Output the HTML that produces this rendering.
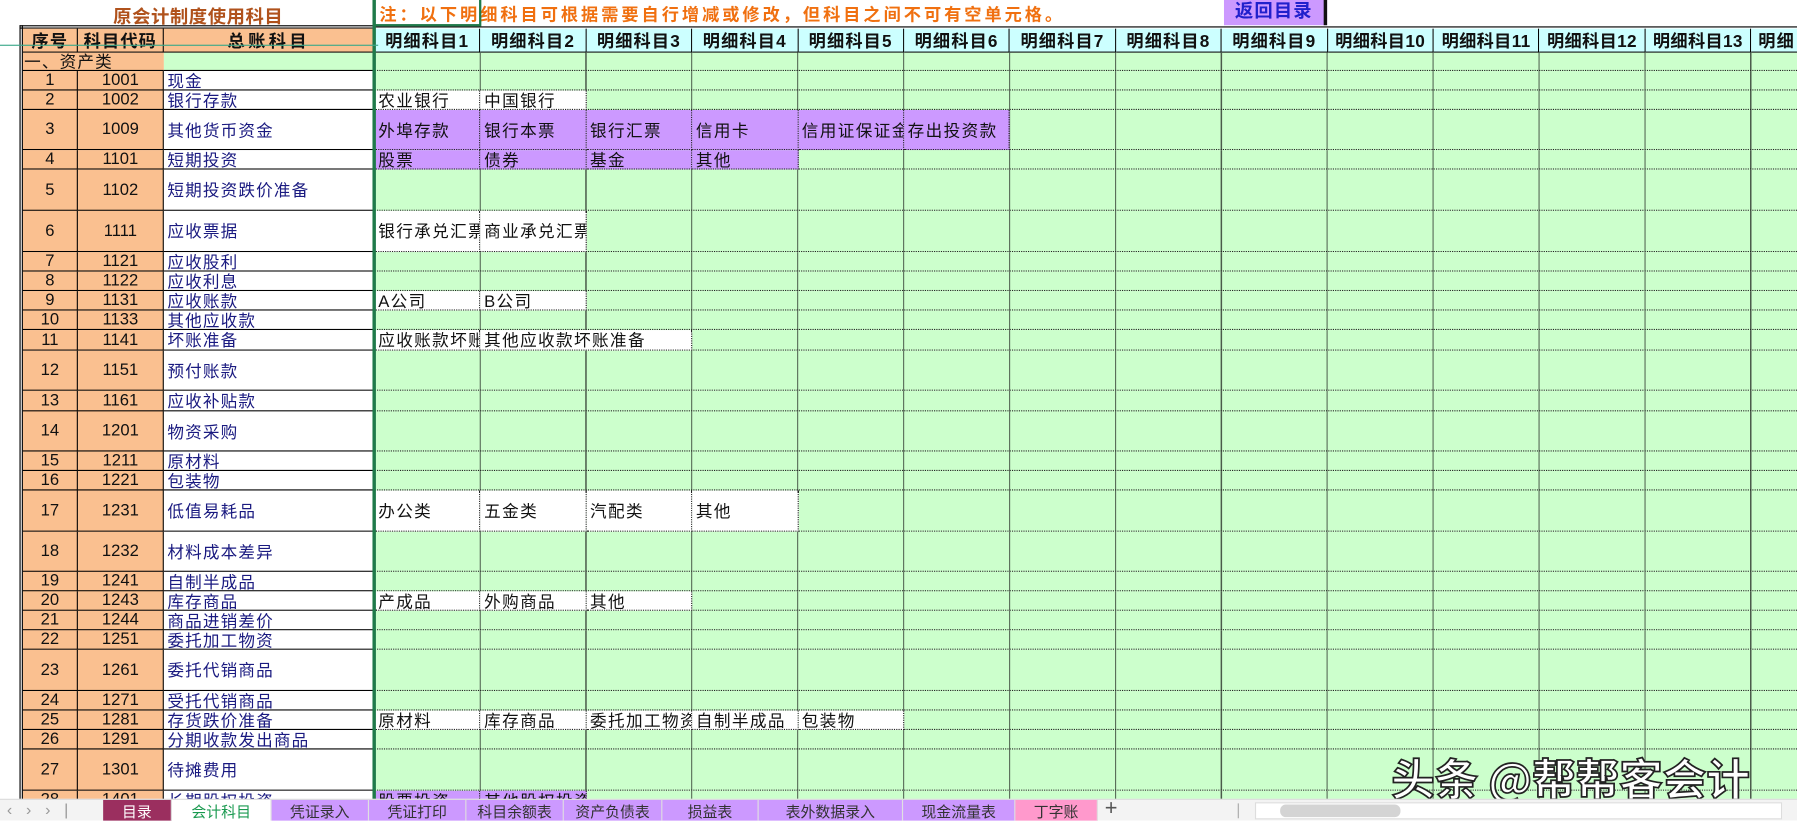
<!DOCTYPE html>
<html><head><meta charset="utf-8"><style>
*{margin:0;padding:0;box-sizing:border-box}
html,body{width:1797px;height:820px;overflow:hidden;background:#fff}
#w{position:absolute;left:0;top:0;width:1568px;height:716px;transform:scale(1.14605);transform-origin:0 0;font-family:"Liberation Sans","Noto Sans CJK SC",sans-serif;font-size:14.5px;color:#111;overflow:hidden}
.t{position:absolute;white-space:nowrap}
.r{position:absolute;left:20px;width:1548px}
.r>b,.r>i,.r>s{position:absolute;top:0;height:100%;font-weight:normal;font-style:normal;text-decoration:none;white-space:nowrap;overflow:hidden;display:flex;align-items:center}
.a{left:0;width:48px;background:#FAC090;border-right:1px solid #000;border-bottom:1px solid #000;justify-content:center}
.c{left:48px;width:75px;background:#FAC090;border-right:1px solid #000;border-bottom:1px solid #000;justify-content:center}
.n{left:123px;width:184px;background:#fff;border-bottom:1px solid #000;color:#1a1a80;padding-left:3px;letter-spacing:1px}
.d{left:307px;width:1241px;background-color:#CCFFCC;background-image:repeating-linear-gradient(to right,transparent 0,transparent 91.4px,#4a5a4a 91.4px,#4a5a4a 92.4px);border-bottom:1px dotted #222}
.x{width:92.4px;background:#fff;border-right:1px dotted #222;border-bottom:1px dotted #222;padding-left:3px;letter-spacing:1.2px}
.p{background:#CC99FF}
.h{position:absolute;top:25px;height:21px;display:flex;align-items:center;justify-content:center;font-weight:bold;font-size:15px;letter-spacing:1px;border-right:1px solid #000;border-bottom:1px solid #000;white-space:nowrap;overflow:hidden}
.tab{position:absolute;top:0;height:19px;display:flex;align-items:center;justify-content:center;font-size:13px;color:#333;border-right:1px solid #e0e0e0}
</style></head><body><div id="w">
<div class="t" style="left:20px;width:306px;top:1px;text-align:center;color:#B0521C;font-weight:bold;font-size:16px;letter-spacing:0.5px">原会计制度使用科目</div>
<div class="t" style="left:331px;top:2px;color:#F07010;font-weight:bold;font-size:15px;letter-spacing:2.6px">注：以下明细科目可根据需要自行增减或修改，但科目之间不可有空单元格。</div>
<div class="t" style="left:1068px;top:0;width:90px;height:22px;background:#CC99FF;border-right:3px solid #111;color:#2020cc;font-weight:bold;font-size:16px;letter-spacing:1px;text-align:center;line-height:22px">返回目录</div>
<div style="position:absolute;left:17px;top:22px;width:310px;height:3px;border-top:1px solid #000;border-bottom:1px solid #000"></div>
<div style="position:absolute;left:327px;top:23px;width:1241px;height:2px;border-top:1px solid #000"></div>
<div style="position:absolute;left:0;top:39px;width:330px;height:1px;background:#3ba88a;z-index:5"></div>
<div class="h" style="left:20px;width:48px;background:#FAC090">序号</div>
<div class="h" style="left:68px;width:75px;background:#FAC090">科目代码</div>
<div class="h" style="left:143px;width:184px;background:#FAC090;letter-spacing:3px">总账科目</div>
<div class="h" style="left:327px;width:92.4px;background:#CCFFFF">明细科目1</div>
<div class="h" style="left:419.4px;width:92.4px;background:#CCFFFF">明细科目2</div>
<div class="h" style="left:511.8px;width:92.4px;background:#CCFFFF">明细科目3</div>
<div class="h" style="left:604.2px;width:92.4px;background:#CCFFFF">明细科目4</div>
<div class="h" style="left:696.6px;width:92.4px;background:#CCFFFF">明细科目5</div>
<div class="h" style="left:789px;width:92.4px;background:#CCFFFF">明细科目6</div>
<div class="h" style="left:881.4px;width:92.4px;background:#CCFFFF">明细科目7</div>
<div class="h" style="left:973.8px;width:92.4px;background:#CCFFFF">明细科目8</div>
<div class="h" style="left:1066.2px;width:92.4px;background:#CCFFFF">明细科目9</div>
<div class="h" style="left:1158.6px;width:92.4px;background:#CCFFFF;letter-spacing:0.3px">明细科目10</div>
<div class="h" style="left:1251px;width:92.4px;background:#CCFFFF;letter-spacing:0.3px">明细科目11</div>
<div class="h" style="left:1343.4px;width:92.4px;background:#CCFFFF;letter-spacing:0.3px">明细科目12</div>
<div class="h" style="left:1435.8px;width:92.4px;background:#CCFFFF;letter-spacing:0.3px">明细科目13</div>
<div class="h" style="left:1528.2px;width:92.4px;background:#CCFFFF;justify-content:flex-start;padding-left:6px">明细</div>

<div class="r" style="top:46px;height:16px"><b class="a" style="width:123px;justify-content:flex-start;padding-left:1px;border-right:none;letter-spacing:1px">一、资产类</b><b class="n" style="background:#CCFFCC"></b><i class="d"></i></div>
<div class="r" style="top:62px;height:17px"><b class="a">1</b><b class="c">1001</b><b class="n">现金</b><i class="d"></i></div>
<div class="r" style="top:79px;height:17px"><b class="a">2</b><b class="c">1002</b><b class="n">银行存款</b><i class="d"></i><s class="x" style="left:307px">农业银行</s><s class="x" style="left:399.4px">中国银行</s></div>
<div class="r" style="top:96px;height:35px"><b class="a">3</b><b class="c">1009</b><b class="n">其他货币资金</b><i class="d"></i><s class="x p" style="left:307px">外埠存款</s><s class="x p" style="left:399.4px">银行本票</s><s class="x p" style="left:491.8px">银行汇票</s><s class="x p" style="left:584.2px">信用卡</s><s class="x p" style="left:676.6px">信用证保证金</s><s class="x p" style="left:769px">存出投资款</s></div>
<div class="r" style="top:131px;height:17px"><b class="a">4</b><b class="c">1101</b><b class="n">短期投资</b><i class="d"></i><s class="x p" style="left:307px">股票</s><s class="x p" style="left:399.4px">债券</s><s class="x p" style="left:491.8px">基金</s><s class="x p" style="left:584.2px">其他</s></div>
<div class="r" style="top:148px;height:36px"><b class="a">5</b><b class="c">1102</b><b class="n">短期投资跌价准备</b><i class="d"></i></div>
<div class="r" style="top:184px;height:36px"><b class="a">6</b><b class="c">1111</b><b class="n">应收票据</b><i class="d"></i><s class="x" style="left:307px">银行承兑汇票</s><s class="x" style="left:399.4px">商业承兑汇票</s></div>
<div class="r" style="top:220px;height:17px"><b class="a">7</b><b class="c">1121</b><b class="n">应收股利</b><i class="d"></i></div>
<div class="r" style="top:237px;height:17px"><b class="a">8</b><b class="c">1122</b><b class="n">应收利息</b><i class="d"></i></div>
<div class="r" style="top:254px;height:17px"><b class="a">9</b><b class="c">1131</b><b class="n">应收账款</b><i class="d"></i><s class="x" style="left:307px">A公司</s><s class="x" style="left:399.4px">B公司</s></div>
<div class="r" style="top:271px;height:17px"><b class="a">10</b><b class="c">1133</b><b class="n">其他应收款</b><i class="d"></i></div>
<div class="r" style="top:288px;height:18px"><b class="a">11</b><b class="c">1141</b><b class="n">坏账准备</b><i class="d"></i><s class="x" style="left:307px">应收账款坏账</s><s class="x" style="left:399.4px;width:184.8px">其他应收款坏账准备</s></div>
<div class="r" style="top:306px;height:35px"><b class="a">12</b><b class="c">1151</b><b class="n">预付账款</b><i class="d"></i></div>
<div class="r" style="top:341px;height:18px"><b class="a">13</b><b class="c">1161</b><b class="n">应收补贴款</b><i class="d"></i></div>
<div class="r" style="top:359px;height:35px"><b class="a">14</b><b class="c">1201</b><b class="n">物资采购</b><i class="d"></i></div>
<div class="r" style="top:394px;height:17px"><b class="a">15</b><b class="c">1211</b><b class="n">原材料</b><i class="d"></i></div>
<div class="r" style="top:411px;height:17px"><b class="a">16</b><b class="c">1221</b><b class="n">包装物</b><i class="d"></i></div>
<div class="r" style="top:428px;height:36px"><b class="a">17</b><b class="c">1231</b><b class="n">低值易耗品</b><i class="d"></i><s class="x" style="left:307px">办公类</s><s class="x" style="left:399.4px">五金类</s><s class="x" style="left:491.8px">汽配类</s><s class="x" style="left:584.2px">其他</s></div>
<div class="r" style="top:464px;height:35px"><b class="a">18</b><b class="c">1232</b><b class="n">材料成本差异</b><i class="d"></i></div>
<div class="r" style="top:499px;height:17px"><b class="a">19</b><b class="c">1241</b><b class="n">自制半成品</b><i class="d"></i></div>
<div class="r" style="top:516px;height:17px"><b class="a">20</b><b class="c">1243</b><b class="n">库存商品</b><i class="d"></i><s class="x" style="left:307px">产成品</s><s class="x" style="left:399.4px">外购商品</s><s class="x" style="left:491.8px">其他</s></div>
<div class="r" style="top:533px;height:17px"><b class="a">21</b><b class="c">1244</b><b class="n">商品进销差价</b><i class="d"></i></div>
<div class="r" style="top:550px;height:17px"><b class="a">22</b><b class="c">1251</b><b class="n">委托加工物资</b><i class="d"></i></div>
<div class="r" style="top:567px;height:36px"><b class="a">23</b><b class="c">1261</b><b class="n">委托代销商品</b><i class="d"></i></div>
<div class="r" style="top:603px;height:17px"><b class="a">24</b><b class="c">1271</b><b class="n">受托代销商品</b><i class="d"></i></div>
<div class="r" style="top:620px;height:17px"><b class="a">25</b><b class="c">1281</b><b class="n">存货跌价准备</b><i class="d"></i><s class="x" style="left:307px">原材料</s><s class="x" style="left:399.4px">库存商品</s><s class="x" style="left:491.8px">委托加工物资</s><s class="x" style="left:584.2px">自制半成品</s><s class="x" style="left:676.6px">包装物</s></div>
<div class="r" style="top:637px;height:17px"><b class="a">26</b><b class="c">1291</b><b class="n">分期收款发出商品</b><i class="d"></i></div>
<div class="r" style="top:654px;height:36px"><b class="a">27</b><b class="c">1301</b><b class="n">待摊费用</b><i class="d"></i></div>
<div class="r" style="top:690px;height:17px"><b class="a">28</b><b class="c">1401</b><b class="n">长期股权投资</b><i class="d"></i><s class="x p" style="left:307px">股票投资</s><s class="x p" style="left:399.4px">其他股权投资</s></div>
<div style="position:absolute;left:17px;top:22px;width:3px;height:680px;border-left:1px solid #000;border-right:1px solid #000"></div>
<div style="position:absolute;left:325px;top:0;width:3px;height:700px;background:#1f7a4a"></div>
<div style="position:absolute;left:418px;top:0;width:2px;height:23px;background:#1f7a4a"></div>
<div style="position:absolute;left:327px;top:21px;width:92px;height:2px;background:#1f7a4a"></div>
<div class="t" style="left:1214px;top:650px;font-size:38px;color:#fff;font-family:'Noto Sans CJK SC',sans-serif;-webkit-text-stroke:1.5px #222;font-weight:bold;z-index:6">头条 @帮帮客会计</div>
<div style="position:absolute;left:0;top:697px;width:1568px;height:19px;background:#f3f3f3;border-top:1px solid #ddd;z-index:7">
<div class="t" style="left:6px;top:0;color:#999;font-size:14px;letter-spacing:12px">‹››|</div>
<div class="tab" style="left:90px;width:60px;background:#9B2F5F;color:#fff">目录</div>
<div class="tab" style="left:150px;width:87px;background:#fff;color:#1a9a50">会计科目</div>
<div class="tab" style="left:237px;width:85px;background:#CC99FF">凭证录入</div>
<div class="tab" style="left:322px;width:85px;background:#CC99FF">凭证打印</div>
<div class="tab" style="left:407px;width:85px;background:#CC99FF">科目余额表</div>
<div class="tab" style="left:492px;width:86px;background:#CC99FF">资产负债表</div>
<div class="tab" style="left:578px;width:84px;background:#CC99FF">损益表</div>
<div class="tab" style="left:662px;width:126px;background:#CC99FF">表外数据录入</div>
<div class="tab" style="left:788px;width:98px;background:#CC99FF">现金流量表</div>
<div class="tab" style="left:886px;width:72px;background:#FF99CC">丁字账</div>
<div class="t" style="left:964px;top:-3px;font-size:19px;color:#555">+</div>
<div style="position:absolute;left:1080px;top:3px;width:1px;height:13px;background:#aaa"></div>
<div style="position:absolute;left:1095px;top:2px;width:460px;height:15px;background:#fff;border:1px solid #ddd"></div>
<div style="position:absolute;left:1117px;top:4px;width:105px;height:11px;background:#d4d4d4;border-radius:5px"></div>
</div>
</div></body></html>
